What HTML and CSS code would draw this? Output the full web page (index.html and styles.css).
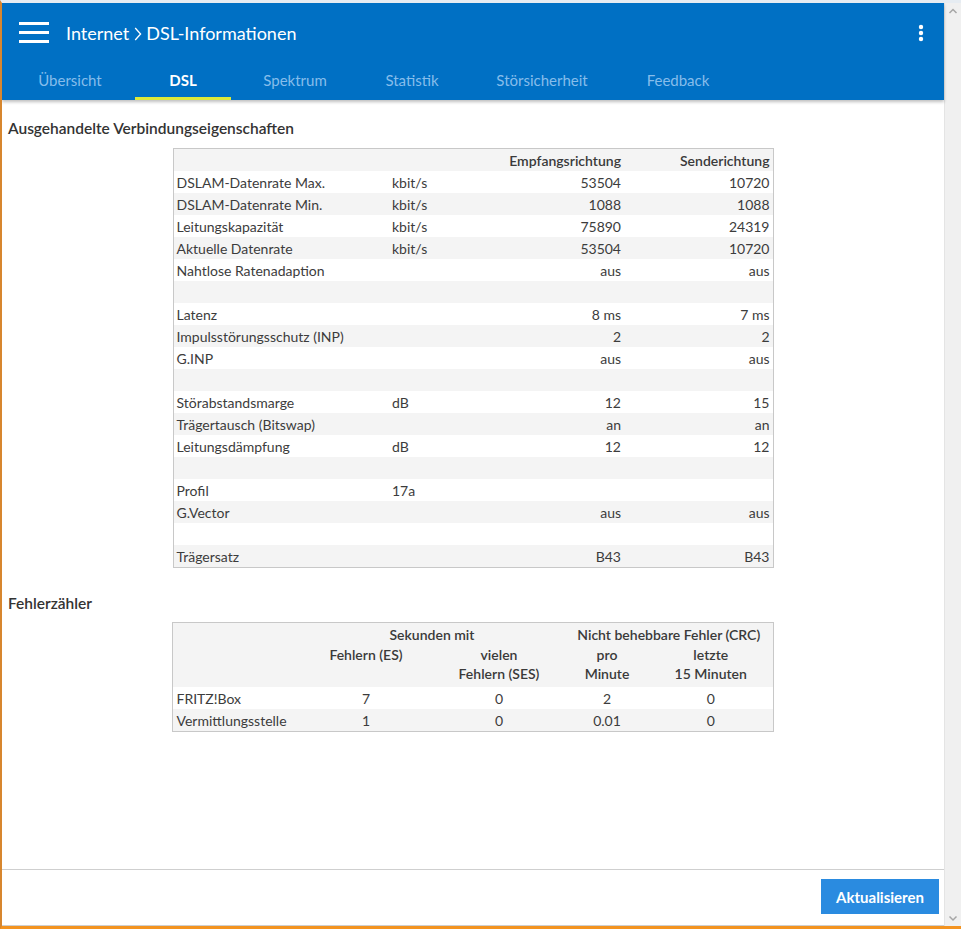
FILE: index.html
```html
<!DOCTYPE html>
<html lang="de">
<head>
<meta charset="utf-8">
<title>DSL-Informationen</title>
<link rel="stylesheet" href="styles.css">
</head>
<body>
<div class="frame">
  <div class="main">
    <header class="header">
      <div class="titlebar">
        <svg class="burger" width="30" height="22" viewBox="0 0 30 22"><rect x="0" y="0" width="30" height="3" fill="#fff"/><rect x="0" y="9" width="30" height="3" fill="#fff"/><rect x="0" y="18" width="30" height="3" fill="#fff"/></svg>
        <span class="title">Internet<svg class="chev" width="8" height="14" viewBox="0 0 8 14"><path d="M1.2 1 L6.6 7 L1.2 13" fill="none" stroke="#fff" stroke-width="1.3"/></svg>DSL-Informationen</span>
        <svg class="dots" width="6" height="18" viewBox="0 0 6 18"><circle cx="3" cy="3" r="2.2" fill="#fff"/><circle cx="3" cy="9" r="2.2" fill="#fff"/><circle cx="3" cy="15" r="2.2" fill="#fff"/></svg>
      </div>
      <nav class="tabs">
        <span class="tab t1">Übersicht</span>
        <span class="tab t2 active">DSL</span>
        <span class="tab t3">Spektrum</span>
        <span class="tab t4">Statistik</span>
        <span class="tab t5">Störsicherheit</span>
        <span class="tab t6">Feedback</span>
      </nav>
    </header>
    <div class="content">
      <h2 class="section">Ausgehandelte Verbindungseigenschaften</h2>
      <table class="grid props">
        <colgroup><col class="c1"><col class="c2"><col class="c3"><col class="c4"></colgroup>
        <tr class="head"><td></td><td></td><th class="r">Empfangsrichtung</th><th class="r">Senderichtung</th></tr>
        <tr><td>DSLAM-Datenrate Max.</td><td>kbit/s</td><td class="r">53504</td><td class="r">10720</td></tr>
        <tr><td>DSLAM-Datenrate Min.</td><td>kbit/s</td><td class="r">1088</td><td class="r">1088</td></tr>
        <tr><td>Leitungskapazität</td><td>kbit/s</td><td class="r">75890</td><td class="r">24319</td></tr>
        <tr><td>Aktuelle Datenrate</td><td>kbit/s</td><td class="r">53504</td><td class="r">10720</td></tr>
        <tr><td>Nahtlose Ratenadaption</td><td></td><td class="r">aus</td><td class="r">aus</td></tr>
        <tr><td></td><td></td><td></td><td></td></tr>
        <tr><td>Latenz</td><td></td><td class="r">8 ms</td><td class="r">7 ms</td></tr>
        <tr><td>Impulsstörungsschutz (INP)</td><td></td><td class="r">2</td><td class="r">2</td></tr>
        <tr><td>G.INP</td><td></td><td class="r">aus</td><td class="r">aus</td></tr>
        <tr><td></td><td></td><td></td><td></td></tr>
        <tr><td>Störabstandsmarge</td><td>dB</td><td class="r">12</td><td class="r">15</td></tr>
        <tr><td>Trägertausch (Bitswap)</td><td></td><td class="r">an</td><td class="r">an</td></tr>
        <tr><td>Leitungsdämpfung</td><td>dB</td><td class="r">12</td><td class="r">12</td></tr>
        <tr><td></td><td></td><td></td><td></td></tr>
        <tr><td>Profil</td><td>17a</td><td></td><td></td></tr>
        <tr><td>G.Vector</td><td></td><td class="r">aus</td><td class="r">aus</td></tr>
        <tr><td></td><td></td><td></td><td></td></tr>
        <tr><td>Trägersatz</td><td></td><td class="r">B43</td><td class="r">B43</td></tr>
      </table>

      <h2 class="section second">Fehlerzähler</h2>
      <table class="grid errors">
        <colgroup><col class="e1"><col class="e2"><col class="e3"><col class="e4"><col class="e5"></colgroup>
        <tr class="head"><th></th><th colspan="2">Sekunden mit</th><th colspan="2">Nicht behebbare Fehler (CRC)</th></tr>
        <tr class="head sub"><th></th><th>Fehlern (ES)</th><th>vielen<br>Fehlern (SES)</th><th>pro<br>Minute</th><th>letzte<br>15 Minuten</th></tr>
        <tr class="white"><td>FRITZ!Box</td><td class="c">7</td><td class="c">0</td><td class="c">2</td><td class="c">0</td></tr>
        <tr class="gray"><td>Vermittlungsstelle</td><td class="c">1</td><td class="c">0</td><td class="c">0.01</td><td class="c">0</td></tr>
      </table>
    </div>
    <footer class="footer">
      <button class="btn">Aktualisieren</button>
    </footer>
  </div>
  <div class="scrollbar">
    <svg class="arrow" width="16" height="16" viewBox="0 0 16 16"><path d="M4.5 10 L8 6.5 L11.5 10" fill="none" stroke="#a6a6a6" stroke-width="1.5"/></svg>
    <svg class="arrow" width="16" height="16" viewBox="0 0 16 16"><path d="M4.5 6.5 L8 10 L11.5 6.5" fill="none" stroke="#a6a6a6" stroke-width="1.5"/></svg>
  </div>
</div>
</body>
</html>
```

FILE: styles.css
```css
html, body {
  margin: 0;
  padding: 0;
  background: #fff;
}
body {
  font-family: Lato, "Noto Sans", "Liberation Sans", sans-serif;
  color: #3c3c3c;
}
.frame {
  box-sizing: border-box;
  width: 961px;
  height: 929px;
  display: flex;
  border-left: 2px solid #d7862e;
  border-top: 3px solid #e6ecf2;
  border-bottom: 3px solid #f39320;
  overflow: hidden;
}
.main {
  flex: 1;
  display: flex;
  flex-direction: column;
  min-width: 0;
  border-bottom: 1px solid #cfcfcf;
}
.header {
  background: #0070c4;
  height: 97px;
  box-shadow: 0 2px 3px rgba(0,0,0,0.25);
  position: relative;
  z-index: 1;
  display: flex;
  flex-direction: column;
}
.titlebar {
  height: 60px;
  display: flex;
  align-items: center;
  padding: 0 20px 0 17px;
  color: #fff;
}
.burger {
  flex: none;
  margin-top: -1px;
}
.title {
  margin-left: 17px;
  font-size: 18px;
  font-weight: 400;
  flex: 1;
  display: flex;
  align-items: center;
}
.chev {
  margin: 1px 4px 0 5px;
}
.dots {
  flex: none;
  margin-top: -1px;
}
.tabs {
  display: flex;
  height: 37px;
  padding-left: 3px;
}
.tab {
  box-sizing: border-box;
  height: 37px;
  padding-top: 8px;
  text-align: center;
  font-size: 15px;
  color: #86bdeb;
  border-bottom: 3px solid transparent;
}
.t1 { width: 130px; }
.t2 { width: 96px; }
.t3 { width: 128px; }
.t4 { width: 106px; }
.t5 { width: 154px; }
.t6 { width: 118px; }
.tab.active {
  color: #fff;
  font-weight: 700;
  border-bottom-color: #dde93a;
}
.content {
  flex: 1;
  padding: 0 6px;
}
.section {
  margin: 18px 0 10px;
  font-size: 15.5px;
  line-height: 20px;
  font-weight: 600;
  color: #333;
}
.section.second {
  margin-top: 25px;
  margin-bottom: 9px;
}
.grid {
  width: 600px;
  margin: 0 auto;
  border-collapse: collapse;
  border: 1px solid #c8c8c8;
  table-layout: fixed;
  font-size: 14px;
  box-sizing: border-box;
}
.grid td, .grid th {
  padding: 0 3px;
  height: 22px;
  line-height: 19px;
  white-space: nowrap;
  vertical-align: middle;
}
.grid th {
  font-weight: 600;
  color: #3a3a3a;
}
.props tr:nth-child(odd) {
  background: #f4f4f4;
}
.props th {
  text-align: right;
}
.c1 { width: 216px; }
.c2 { width: 100px; }
.c3 { width: 135px; }
.c4 { width: 149px; }
.r { text-align: right; }
.c { text-align: center; }
.e1 { width: 126px; }
.e2 { width: 134px; }
.e3 { width: 132px; }
.e4 { width: 84px; }
.e5 { width: 124px; }
.errors .head {
  background: #f4f4f4;
}
.errors .head th {
  text-align: center;
  height: 22px;
}
.errors .sub th {
  vertical-align: top;
  height: 42px;
  line-height: 19px;
}
.errors .white { background: #fff; }
.errors .gray { background: #f4f4f4; }
.footer {
  height: 56px;
  border-top: 1px solid #cfcfcf;
  display: flex;
  justify-content: flex-end;
  align-items: flex-start;
  padding: 9px 5px 0 0;
  box-sizing: border-box;
}
.btn {
  width: 118px;
  height: 35px;
  border: none;
  background: #2a8be0;
  color: #fff;
  font-family: inherit;
  font-size: 15px;
  font-weight: 700;
  padding: 0;
}
.scrollbar {
  width: 16px;
  flex: none;
  background: #f0f0f0;
  border-left: 1px solid #e4e4e4;
  display: flex;
  flex-direction: column;
  justify-content: space-between;
}
```
